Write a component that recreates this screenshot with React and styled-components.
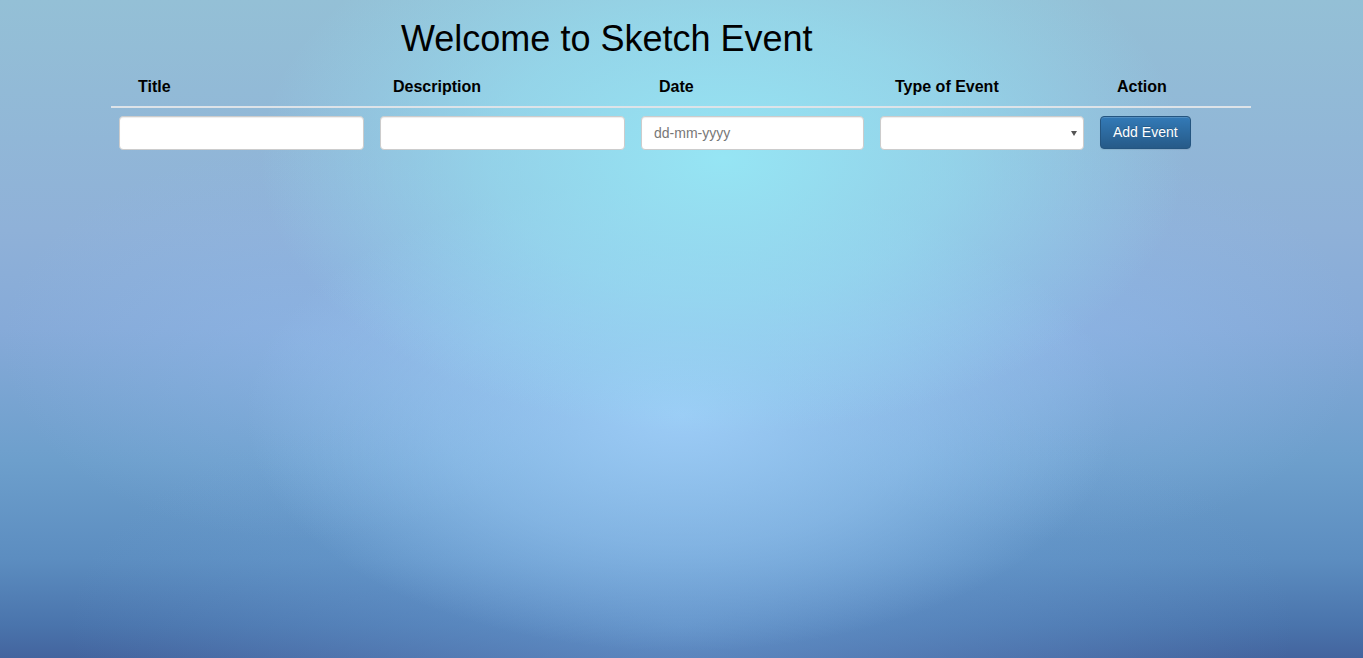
import React, { Component } from 'react';
import styled, { createGlobalStyle } from 'styled-components';

const GlobalStyle = createGlobalStyle`
  html, body {
    margin: 0;
    padding: 0;
    height: 100%;
  }
  body {
    font-family: "Liberation Sans", Arial, Helvetica, sans-serif;
    font-size: 14px;
    line-height: 1.42857;
    color: #000;
  }
  * {
    box-sizing: border-box;
  }
`;

const columns = [
  { label: 'Title', width: 261, indent: 27 },
  { label: 'Description', width: 261, indent: 21 },
  { label: 'Date', width: 239, indent: 26 },
  { label: 'Type of Event', width: 220, indent: 23 },
  { label: 'Action', width: 159, indent: 25 },
];

class App extends Component {
  constructor(props) {
    super(props);
    this.state = {
      title: '',
      description: '',
      date: '',
      type: '',
    };
  }

  handleChange = (event) => {
    this.setState({
      [event.target.name]: event.target.value
    });
  }

  addEvent = (event) => {
    event.preventDefault();
  }

  render() {
    return (
      <Page>
        <GlobalStyle />
        <Container>
          <Heading>Welcome to Sketch Event</Heading>
          <EventTable>
            <colgroup>
              {columns.map(col => <col key={col.label} width={col.width} />)}
            </colgroup>
            <thead>
              <tr>
                {columns.map(col => (
                  <HeadCell key={col.label} indent={col.indent}>{col.label}</HeadCell>
                ))}
              </tr>
            </thead>
            <tbody>
              <tr>
                <Cell>
                  <Field type="text" name="title" value={this.state.title} onChange={this.handleChange} />
                </Cell>
                <Cell>
                  <Field type="text" name="description" value={this.state.description} onChange={this.handleChange} />
                </Cell>
                <Cell>
                  <Field type="text" name="date" placeholder="dd-mm-yyyy" value={this.state.date} onChange={this.handleChange} />
                </Cell>
                <Cell>
                  <SelectWrap>
                    <Select name="type" value={this.state.type} onChange={this.handleChange}>
                      <option value=""></option>
                      <option value="meeting">Meeting</option>
                      <option value="party">Party</option>
                    </Select>
                    <Caret />
                  </SelectWrap>
                </Cell>
                <Cell>
                  <AddButton type="button" onClick={this.addEvent}>Add Event</AddButton>
                </Cell>
              </tr>
            </tbody>
          </EventTable>
        </Container>
      </Page>
    );
  }
}

const Page = styled.div`
  min-height: 100vh;
  background:
    radial-gradient(ellipse 34% 42% at 53% 24%, rgba(150, 229, 244, 1) 0%, rgba(150, 229, 244, 0.6) 50%, rgba(150, 229, 244, 0) 100%),
    radial-gradient(ellipse 32% 36% at 50% 63%, rgba(158, 206, 248, 0.95) 0%, rgba(158, 206, 248, 0.5) 55%, rgba(158, 206, 248, 0) 100%),
    radial-gradient(ellipse 45% 40% at 50% 95%, rgba(115, 168, 222, 0.55) 0%, rgba(115, 168, 222, 0) 100%),
    radial-gradient(ellipse 22% 30% at 78% 52%, rgba(146, 188, 238, 0.45) 0%, rgba(146, 188, 238, 0) 100%),
    radial-gradient(ellipse 22% 30% at 22% 52%, rgba(146, 188, 238, 0.4) 0%, rgba(146, 188, 238, 0) 100%),
    linear-gradient(to bottom, #94c0d6 0%, #8fb1d8 35%, #86aad8 50%, #6d9fcc 70%, #5c8dc0 85%, #4a74ac 95%, #43649e 100%);
`;

const Container = styled.div`
  width: 1171px;
  margin: 0 auto;
  padding: 0 16px 0 15px;
`;

const Heading = styled.h1`
  margin: 0;
  padding: 19px 0 11px 290px;
  font-family: "Liberation Sans", Arial, sans-serif;
  font-size: 36px;
  font-weight: 400;
  line-height: 1.1;
  color: #000;
`;

const EventTable = styled.table`
  width: 100%;
  border-collapse: collapse;
  border-spacing: 0;
  table-layout: fixed;
`;

const HeadCell = styled.th`
  padding: 7px 8px 9px ${props => props.indent}px;
  text-align: left;
  font-size: 16px;
  font-weight: 700;
  line-height: 20px;
  vertical-align: bottom;
  border-bottom: 2px solid #dde3e8;
`;

const Cell = styled.td`
  padding: 8px;
  vertical-align: top;
`;

const Field = styled.input`
  display: block;
  width: 100%;
  height: 34px;
  padding: 6px 12px;
  font-family: "Liberation Sans", Arial, sans-serif;
  font-size: 14px;
  color: #555;
  background: #fff;
  border: 1px solid #ccc;
  border-radius: 4px;
  box-shadow: inset 0 1px 1px rgba(0, 0, 0, 0.075);
  outline: none;

  &::placeholder {
    color: #777;
  }
`;

const SelectWrap = styled.div`
  position: relative;
  width: 204px;
`;

const Select = styled.select`
  display: block;
  width: 100%;
  height: 34px;
  padding: 6px 12px;
  font-family: "Liberation Sans", Arial, sans-serif;
  font-size: 14px;
  color: #555;
  background: #fff;
  border: 1px solid #ccc;
  border-radius: 4px;
  box-shadow: inset 0 1px 1px rgba(0, 0, 0, 0.075);
  appearance: none;
  -webkit-appearance: none;
  outline: none;
`;

const Caret = styled.span`
  position: absolute;
  right: 7px;
  top: 15px;
  width: 0;
  height: 0;
  border-left: 3px solid transparent;
  border-right: 3px solid transparent;
  border-top: 5px solid #555;
  pointer-events: none;
`;

const AddButton = styled.button`
  display: inline-block;
  height: 33px;
  padding: 6px 12px;
  font-family: "Liberation Sans", Arial, sans-serif;
  font-size: 14px;
  line-height: 1.42857;
  color: #fff;
  background-image: linear-gradient(to bottom, #337ab7 0%, #265a88 100%);
  border: 1px solid #245580;
  border-radius: 4px;
  box-shadow: inset 0 1px 0 rgba(255, 255, 255, 0.15), 0 1px 1px rgba(0, 0, 0, 0.075);
  text-shadow: 0 -1px 0 rgba(0, 0, 0, 0.2);
  cursor: pointer;
`;

export default App;
